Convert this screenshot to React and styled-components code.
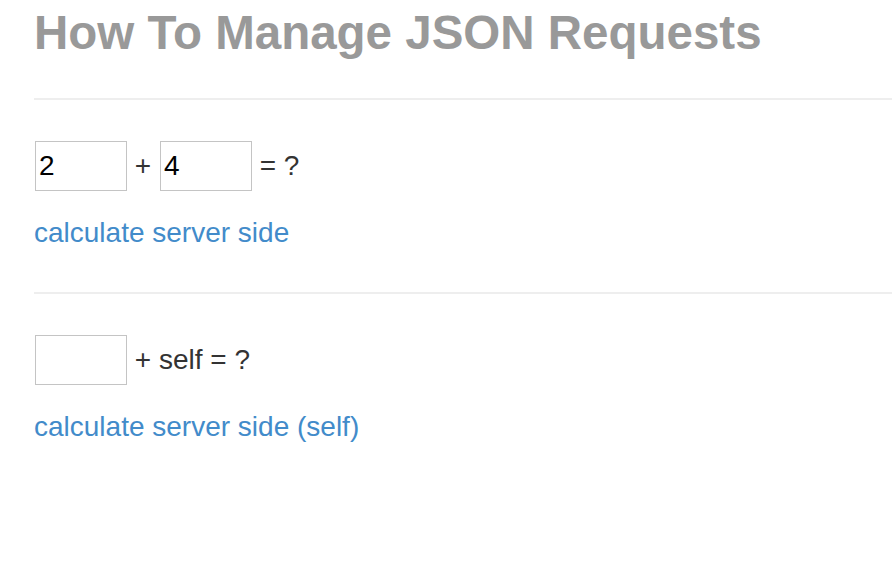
import React, { useState } from "react";
import styled, { createGlobalStyle } from "styled-components";

const GlobalStyle = createGlobalStyle`
  html, body {
    margin: 0;
    padding: 0;
    background: #fff;
  }
  body {
    font-family: "Liberation Sans", Arial, Helvetica, sans-serif;
    color: #333;
  }
`;

const Page = styled.div`
  padding: 7px 0 0 34px;
`;

const Title = styled.h1`
  margin: 0;
  font-size: 47.5px;
  line-height: 52px;
  font-weight: 700;
  color: #999;
  white-space: nowrap;
`;

const Divider = styled.hr`
  margin: ${({ $top }) => $top}px 0 0;
  border: 0;
  border-top: 2px solid #eee;
`;

const Section = styled.section`
  padding-top: 41px;
`;

const Sum = styled.div`
  font-size: 28px;
  line-height: 50px;
  color: #333;
  white-space: nowrap;
`;

const NumberInput = styled.input`
  box-sizing: border-box;
  width: 92px;
  height: 50px;
  margin: 0 0 0 1px;
  padding: 0 3px;
  border: 1px solid #c4c4c4;
  border-radius: 0;
  font-family: "Liberation Sans", Arial, sans-serif;
  font-size: 28px;
  color: #000;
  vertical-align: baseline;
  outline: none;
`;

const ActionLink = styled.a`
  display: inline-block;
  margin-top: 25px;
  font-size: 28px;
  line-height: 34px;
  color: #428bca;
  text-decoration: none;
  cursor: pointer;
`;

export default function App() {
  const [a, setA] = useState("2");
  const [b, setB] = useState("4");
  const [self, setSelf] = useState("");

  return (
    <>
      <GlobalStyle />
      <Page>
        <Title>How To Manage JSON Requests</Title>
        <Divider $top={39} />
        <Section>
          <Sum>
            <NumberInput value={a} onChange={(e) => setA(e.target.value)} /> +{" "}
            <NumberInput value={b} onChange={(e) => setB(e.target.value)} /> = ?
          </Sum>
          <ActionLink>calculate server side</ActionLink>
        </Section>
        <Divider $top={42} />
        <Section>
          <Sum>
            <NumberInput value={self} onChange={(e) => setSelf(e.target.value)} /> + self = ?
          </Sum>
          <ActionLink>calculate server side (self)</ActionLink>
        </Section>
      </Page>
    </>
  );
}
